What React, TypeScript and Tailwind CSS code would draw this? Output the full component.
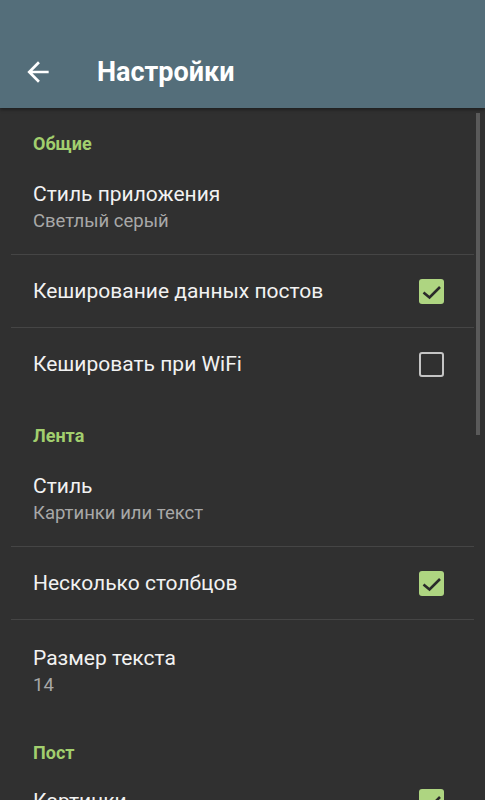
import React from "react";

function Check({ on }: { on: boolean }) {
  if (on) {
    return (
      <div className="w-[25px] h-[25px] rounded-[3px] bg-[#aed581] relative">
        <svg width="25" height="25" viewBox="0 0 25 25" className="absolute left-0 top-0">
          <path d="M4.5 13.5l6 5 10.5-10.5" fill="none" stroke="#2a2a2a" strokeWidth="2.6" />
        </svg>
      </div>
    );
  }
  return <div className="w-[25px] h-[25px] rounded-[3px] border-[2.5px] border-[#c4c4c4]" />;
}

function Category({ text }: { text: string }) {
  return (
    <div className="h-[48px] pl-[33px] pt-[25px] text-[18px] leading-[22px] font-bold text-[#a2cf6e]">{text}</div>
  );
}

function TwoLine({ title, sub, h }: { title: string; sub: string; h: string }) {
  return (
    <div className={h + " pl-[33px] pt-[25px]"}>
      <div className="text-[21px] leading-[26px] text-[#f2f2f2]">{title}</div>
      <div className="text-[18.5px] leading-[28px] text-[#a8a8a8]">{sub}</div>
    </div>
  );
}

function Divider() {
  return <div className="h-px bg-[#454545] ml-[11px] mr-[11px]" />;
}

function OneLine({ title, on }: { title: string; on: boolean }) {
  return (
    <div className="h-[72px] pl-[33px] pr-[41px] flex items-center justify-between">
      <div className="text-[21px] leading-[26px] text-[#f2f2f2]">{title}</div>
      <Check on={on} />
    </div>
  );
}

export default function App() {
  return (
    <div className="w-[485px] h-[800px] overflow-hidden bg-[#303030] relative" style={{ fontFamily: "Roboto, 'Noto Sans', sans-serif" }}>
      <div className="h-[108px] bg-[#546e7a] flex items-end pb-[22px] shadow-[0_2px_3px_rgba(0,0,0,0.35)] relative z-10">
        <div className="w-[97px] flex items-center pl-[22px] h-[28px]">
          <svg width="32" height="32" viewBox="0 0 24 24">
            <path d="M20 11H7.83l5.59-5.59L12 4l-8 8 8 8 1.41-1.41L7.83 13H20v-2z" fill="#ffffff" />
          </svg>
        </div>
        <div className="text-[27px] leading-[28px] font-bold text-white">Настройки</div>
      </div>
      <div className="flex flex-col">
        <Category text="Общие" />
        <TwoLine title="Стиль приложения" sub="Светлый серый" h="h-[98px]" />
        <Divider />
        <OneLine title="Кеширование данных постов" on={true} />
        <Divider />
        <OneLine title="Кешировать при WiFi" on={false} />
        <Category text="Лента" />
        <TwoLine title="Стиль" sub="Картинки или текст" h="h-[98px]" />
        <Divider />
        <OneLine title="Несколько столбцов" on={true} />
        <Divider />
        <TwoLine title="Размер текста" sub="14" h="h-[97px]" />
        <Category text="Пост" />
        <OneLine title="Картинки" on={true} />
      </div>
      <div className="absolute left-[476px] top-[113px] w-[4px] h-[322px] bg-[#5a5a5a]" />
    </div>
  );
}
